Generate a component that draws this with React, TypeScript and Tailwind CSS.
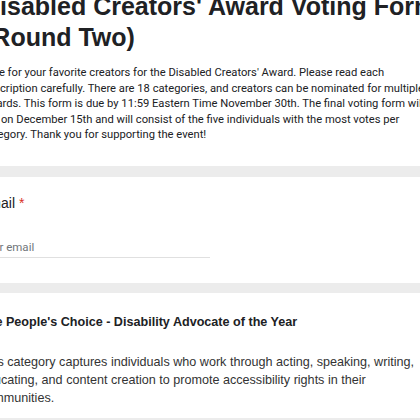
import React from "react";

const sans = { fontFamily: '"Liberation Sans", Arial, sans-serif' };

export default function App() {
  return (
    <div className="w-[420px] h-[420px] overflow-hidden bg-white relative">
      <div className="w-[470px] ml-[-20px] flex flex-col">
        {/* Header card */}
        <div className="h-[166px] text-[#202124]">
          <div className="mt-[-9px] text-[25px] leading-[31px] font-bold whitespace-nowrap font-['Liberation_Sans',Arial,sans-serif]">
            <div className="ml-[2px]">Disabled Creators' Award Voting Form</div>
            <div className="ml-[4px]">(Round Two)</div>
          </div>
          <div className="mt-[12px] ml-[2px] text-[11.2px] leading-[15.5px] text-[#202124] whitespace-nowrap font-['Roboto',sans-serif]">
            <div>Vote for your favorite creators for the Disabled Creators' Award. Please read each</div>
            <div>description carefully. There are 18 categories, and creators can be nominated for multiple</div>
            <div>awards. This form is due by 11:59 Eastern Time November 30th. The final voting form will be</div>
            <div>out on December 15th and will consist of the five individuals with the most votes per</div>
            <div>category. Thank you for supporting the event!</div>
          </div>
        </div>

        <div className="h-[11px] bg-[#ececec]" />

        {/* Email card */}
        <div className="h-[106px] pt-[17px]" style={sans}>
          <div className="text-[14px] leading-[18px] text-[#202124] whitespace-nowrap">
            Email <span className="text-[#d93025]">*</span>
          </div>
          <div className="mt-[27px] w-[230px] border-b border-[#e0e0e0] pb-[2px]">
            <div className="text-[11.5px] leading-[16px] text-[#70757a] font-['Roboto',sans-serif] whitespace-nowrap">Your email</div>
          </div>
        </div>

        <div className="h-[10px] bg-[#ececec]" />

        {/* Category card */}
        <div className="h-[125px] pt-[21px] text-[#202124]" style={sans}>
          <div className="text-[12.6px] leading-[16px] font-bold whitespace-nowrap">
            The People's Choice - Disability Advocate of the Year
          </div>
          <div className="mt-[23px] text-[12.6px] leading-[18px] text-[#333] whitespace-nowrap">
            <div>This category captures individuals who work through acting, speaking, writing,</div>
            <div>educating, and content creation to promote accessibility rights in their</div>
            <div>communities.</div>
          </div>
        </div>

        <div className="h-[10px] bg-[#ececec]" />
      </div>
    </div>
  );
}
